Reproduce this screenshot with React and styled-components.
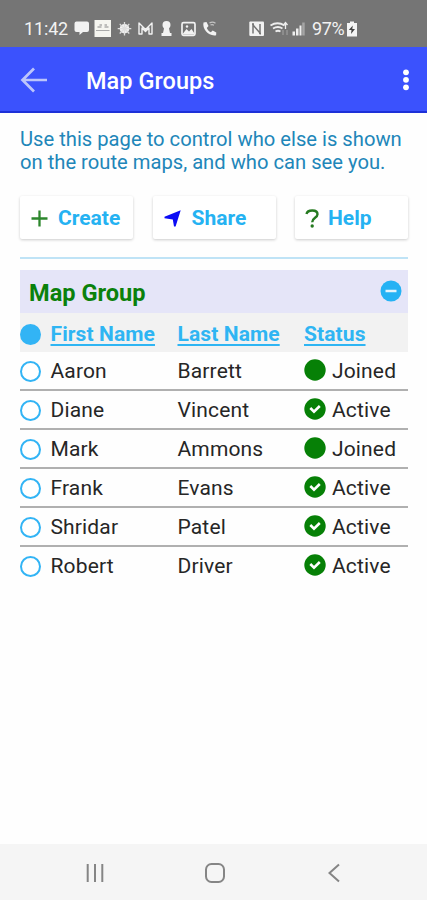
import React from 'react'
import styled, { createGlobalStyle } from 'styled-components'

const GlobalStyle = createGlobalStyle`
* {
    box-sizing: border-box;
}

body {
    margin: 0;
    background-color: #fefefe;
    font-family: Roboto, "Liberation Sans", sans-serif;
}
`

const Phone = styled.div`
    display: flex;
    flex-direction: column;
    width: 427px;
    height: 900px;
    overflow: hidden;
`

const StatusBar = styled.div`
    display: flex;
    align-items: center;
    flex: none;
    height: 47px;
    padding: 11px 0 0 24px;
    background-color: #757575;
    color: #f2f2f2;

    svg {
        flex: none;
        display: block;
    }
`

const StatusText = styled.span`
    flex: none;
    width: ${props => props.$width}px;
    margin-left: ${props => props.$left || 0}px;
    padding-bottom: 1px;
    font-size: 18px;
    line-height: 21px;
    letter-spacing: ${props => props.$spacing}px;
    white-space: nowrap;
`

const AppBar = styled.header`
    display: flex;
    align-items: center;
    flex: none;
    height: 66px;
    padding: 2px 17px 0 20px;
    background-color: #3b52fd;
    border-bottom: 2px solid #1d30d8;
    color: white;

    h1 {
        flex: 1;
        margin: 2px 0 0 38px;
        font-size: 23.5px;
        font-weight: 500;
        letter-spacing: 0.05px;
    }

    svg {
        flex: none;
        display: block;
    }
`

const Content = styled.main`
    flex: 1;
    padding: 15px 19px 0 20px;
`

const Intro = styled.p`
    margin: 0;
    font-size: 20.2px;
    line-height: 23px;
    white-space: nowrap;
    color: #2186b9;
`

const Actions = styled.div`
    display: flex;
    justify-content: space-between;
    margin-top: 22px;
    padding-bottom: 18px;
    border-bottom: 2px solid #bfe3f6;
`

const ActionButton = styled.button`
    display: flex;
    align-items: center;
    width: ${props => props.$width}px;
    height: 43px;
    padding: 1px 0 0 ${props => props.$pad}px;
    border: 0;
    border-radius: 2px;
    background-color: white;
    box-shadow: 0 1px 3px rgba(0, 0, 0, 0.2);
    color: #25b2f2;
    font-family: inherit;
    font-size: 21px;
    font-weight: 700;

    svg {
        flex: none;
        margin-right: ${props => props.$gap}px;
    }
`

const GroupHeader = styled.div`
    display: flex;
    align-items: center;
    justify-content: space-between;
    height: 43px;
    margin-top: 11px;
    padding: 3px 6px 0 9px;
    background-color: #e5e5f8;

    h2 {
        margin: 0;
        font-size: 23.6px;
        font-weight: 700;
        color: #0b810b;
    }

    svg {
        margin-top: -4px;
    }
`

const Row = styled.div`
    display: grid;
    grid-template-columns: 30.5px 127px 126.5px 1fr;
    align-items: center;
    height: 39px;
    font-size: 21px;
    letter-spacing: 0.15px;
    color: #262626;
    border-bottom: 2px solid ${props => (props.$last ? 'transparent' : '#b0b0b0')};
`

const HeadRow = styled(Row)`
    padding-top: 3px;
    background-color: #f2f2f2;
    border-bottom: 0;
    letter-spacing: 0.1px;

    a {
        color: #2fb5f3;
        font-weight: 700;
        text-decoration: underline;
        text-decoration-thickness: 1.5px;
        text-underline-offset: 3px;
    }
`

const Radio = styled.span`
    width: 21px;
    height: 21px;
    margin-top: ${props => (props.$checked ? 0 : 2)}px;
    border: 2px solid #32b4f5;
    border-radius: 50%;
    background-color: ${props => (props.$checked ? '#32b4f5' : 'white')};
`

const Status = styled.span`
    display: flex;
    align-items: center;
    gap: 6px;

    svg {
        margin-top: -2px;
    }
`

const NavBar = styled.nav`
    display: flex;
    align-items: center;
    flex: none;
    gap: 99.5px;
    height: 56px;
    padding: 2px 0 0 85px;
    background-color: #f5f5f5;
`

const people = [
    { first: 'Aaron', last: 'Barrett', status: 'Joined' },
    { first: 'Diane', last: 'Vincent', status: 'Active' },
    { first: 'Mark', last: 'Ammons', status: 'Joined' },
    { first: 'Frank', last: 'Evans', status: 'Active' },
    { first: 'Shridar', last: 'Patel', status: 'Active' },
    { first: 'Robert', last: 'Driver', status: 'Active' },
]

function NotificationIcons() {
    return (
        <svg width="148" height="20" viewBox="72 19 148 20" fill="#f2f2f2">
            <path d="M76 21.500h11a2 2 0 0 1 2 2v6.500a2 2 0 0 1-2 2h-4l-3.500 3v-3H76.500a2 2 0 0 1-2-2v-6.500a2 2 0 0 1 2-2z" />
            <path d="M94.500 20H111v17H94.500z" fill="#f5f5f0" />
            <path d="M96 30.500h13.500" stroke="#aaa" strokeWidth="1" />
            <path d="M97.500 27h4M104.500 27h4M99.500 25h2.500M104.500 25h2.500" stroke="#888" strokeWidth="1.200" />
            <circle cx="124.500" cy="28.700" r="4.800" />
            <path d="M124.500 22v13.500M117.700 28.700h13.600M119.700 23.900l9.600 9.600M129.300 23.900l-9.600 9.600" stroke="#dedede" strokeWidth="1.300" />
            <path d="M139 34v-11l6.500 6.500 6.500-6.500v11h-3v-6l-3.500 3.500-3.500-3.500v6z" fill="none" stroke="#f2f2f2" strokeWidth="1.400" strokeLinejoin="round" />
            <path d="M166.500 21a4 4 0 0 1 4 4c0 2-1 2.500-1.500 3.500l1 4.500h1.500v3h-10v-3h1.500l1-4.500c-.5-1-1.500-1.500-1.500-3.500a4 4 0 0 1 4-4z" />
            <rect x="182" y="22.700" width="13" height="12.600" rx="1.500" fill="none" stroke="#f2f2f2" strokeWidth="1.700" />
            <path d="M183 33.500l3.500-4.500 2.500 2.500 2.500-2.500 3 4.500v1h-11.500z" />
            <circle cx="187" cy="26.500" r="1.200" />
            <path d="M203.500 22.500l3-.5 2 4-1.700 2c.8 2 2 3.200 4 4.200l1.900-1.800 3.600 2-.2 2.800c-7 1.500-14.200-6-12.600-12.700z" />
            <path d="M210.500 25q1.700-1 3.400.2M209.500 23q3-2 6 .2" fill="none" stroke="#c4c4c4" strokeWidth="1.200" />
        </svg>
    )
}

function ConnectionIcons() {
    return (
        <svg width="58" height="20" viewBox="248 19 58 20">
            <rect x="249.300" y="21.500" width="14.700" height="14.500" rx="1" fill="#f2f2f2" />
            <path d="M253 33.500v-8.500l7 8v-9M252 24h2M259 33.500h2" fill="none" stroke="#757575" strokeWidth="1.500" />
            <path d="M270.500 25.500q7-4.500 14 0M273 28.500q5-3 9.500 0M275.500 31.500q2.500-1.500 5 0" fill="none" stroke="#ededed" strokeWidth="1.800" />
            <path d="M285.500 29v-6M283.500 25l2-2.500 2 2.500" fill="none" stroke="#eee" strokeWidth="1.300" />
            <path d="M283 30v5M287 30v5" fill="none" stroke="#a0a0a0" strokeWidth="1.100" />
            <path d="M292.500 35.500v-4h2.500v4zM296 35.500v-7h2.500v7zM299.500 35.500v-10h2v10z" fill="#eee" />
            <path d="M302.200 35.500v-13h2.500v13z" fill="#a5a5a5" />
        </svg>
    )
}

function StatusIcon({ status }) {
    return (
        <svg width="22" height="22" viewBox="0 0 22 22">
            <circle cx="11" cy="11" r="10.700" fill="#068006" />
            {status === 'Active' && (
                <path d="M6.300 10l3.700 3.600 5.800-5.600" fill="none" stroke="white" strokeWidth="2.600" />
            )}
        </svg>
    )
}

function App() {
    return (
        <Phone>
            <GlobalStyle />
            <StatusBar>
                <StatusText $width={48} $spacing={-0.15}>11:42</StatusText>
                <NotificationIcons />
                <svg width="28" height="20" />
                <ConnectionIcons />
                <StatusText $left={6} $width={34} $spacing={-0.4}>97%</StatusText>
                <svg width="12" height="18" viewBox="0 0 12 18">
                    <path d="M4 1.500h4v1.500h3v13.500h-10v-13.500h3z" fill="#f4f4f4" />
                    <path d="M6.800 5.500l-4 4.500h2.700l-.5 4 4-5h-2.700z" fill="#444" />
                </svg>
            </StatusBar>
            <AppBar>
                <svg width="28" height="28" viewBox="0 0 28 28" fill="none" stroke="#bcc5fb" strokeWidth="2.700">
                    <path d="M27 14H3M14 2.500L2.500 14 14 25.500" />
                </svg>
                <h1>Map Groups</h1>
                <svg width="8" height="24" viewBox="0 0 8 24" fill="white">
                    <circle cx="4" cy="4.300" r="2.900" />
                    <circle cx="4" cy="11.800" r="2.900" />
                    <circle cx="4" cy="19.300" r="2.900" />
                </svg>
            </AppBar>
            <Content>
                <Intro>
                    Use this page to control who else is shown<br />
                    on the route maps, and who can see you.
                </Intro>
                <Actions>
                    <ActionButton $width={113} $pad={11} $gap={10}>
                        <svg width="17" height="17" viewBox="0 0 17 17" stroke="#2d872d" strokeWidth="2.300">
                            <path d="M8.500 .5v16M.5 8.500h16" />
                        </svg>
                        Create
                    </ActionButton>
                    <ActionButton $width={123} $pad={11} $gap={11}>
                        <svg width="17" height="17" viewBox="0 0 17 17" fill="#0c0cf5">
                            <path d="M16.700 .3L11.600 16.500H10L8.800 9.500 .5 8.200V6.800z" />
                        </svg>
                        Share
                    </ActionButton>
                    <ActionButton $width={113} $pad={10} $gap={9}>
                        <svg width="14" height="19" viewBox="0 0 14 19">
                            <path d="M1.500 5C2.500 .3 12.500 .3 12.500 5.300c0 3.600-5.300 3.500-5.300 7.900" fill="none" stroke="#267a20" strokeWidth="2.400" />
                            <circle cx="7.200" cy="17" r="1.700" fill="#267a20" />
                        </svg>
                        Help
                    </ActionButton>
                </Actions>
                <GroupHeader>
                    <h2>Map Group</h2>
                    <svg width="22" height="22" viewBox="0 0 22 22">
                        <circle cx="11" cy="11" r="10.500" fill="#25b2f4" />
                        <path d="M5.500 11h11" stroke="#e5f4fc" strokeWidth="2.500" />
                    </svg>
                </GroupHeader>
                <HeadRow>
                    <Radio $checked />
                    <a>First Name</a>
                    <a>Last Name</a>
                    <a>Status</a>
                </HeadRow>
                {people.map((person, index) => (
                    <Row key={person.first} $last={index === people.length - 1}>
                        <Radio />
                        <span>{person.first}</span>
                        <span>{person.last}</span>
                        <Status>
                            <StatusIcon status={person.status} />
                            {person.status}
                        </Status>
                    </Row>
                ))}
            </Content>
            <NavBar>
                <svg width="20" height="20" viewBox="0 0 20 20" stroke="#858585" strokeWidth="2">
                    <path d="M2.700 1v18M10 1v18M17.300 1v18" />
                </svg>
                <svg width="20" height="20" viewBox="0 0 20 20" fill="none" stroke="#858585" strokeWidth="2">
                    <rect x="1" y="1" width="18" height="18" rx="5.500" />
                </svg>
                <svg width="20" height="20" viewBox="0 0 20 20" fill="none" stroke="#858585" strokeWidth="2">
                    <path d="M15 1.500L5.500 10l9.500 8.500" />
                </svg>
            </NavBar>
        </Phone>
    )
}

export default App
